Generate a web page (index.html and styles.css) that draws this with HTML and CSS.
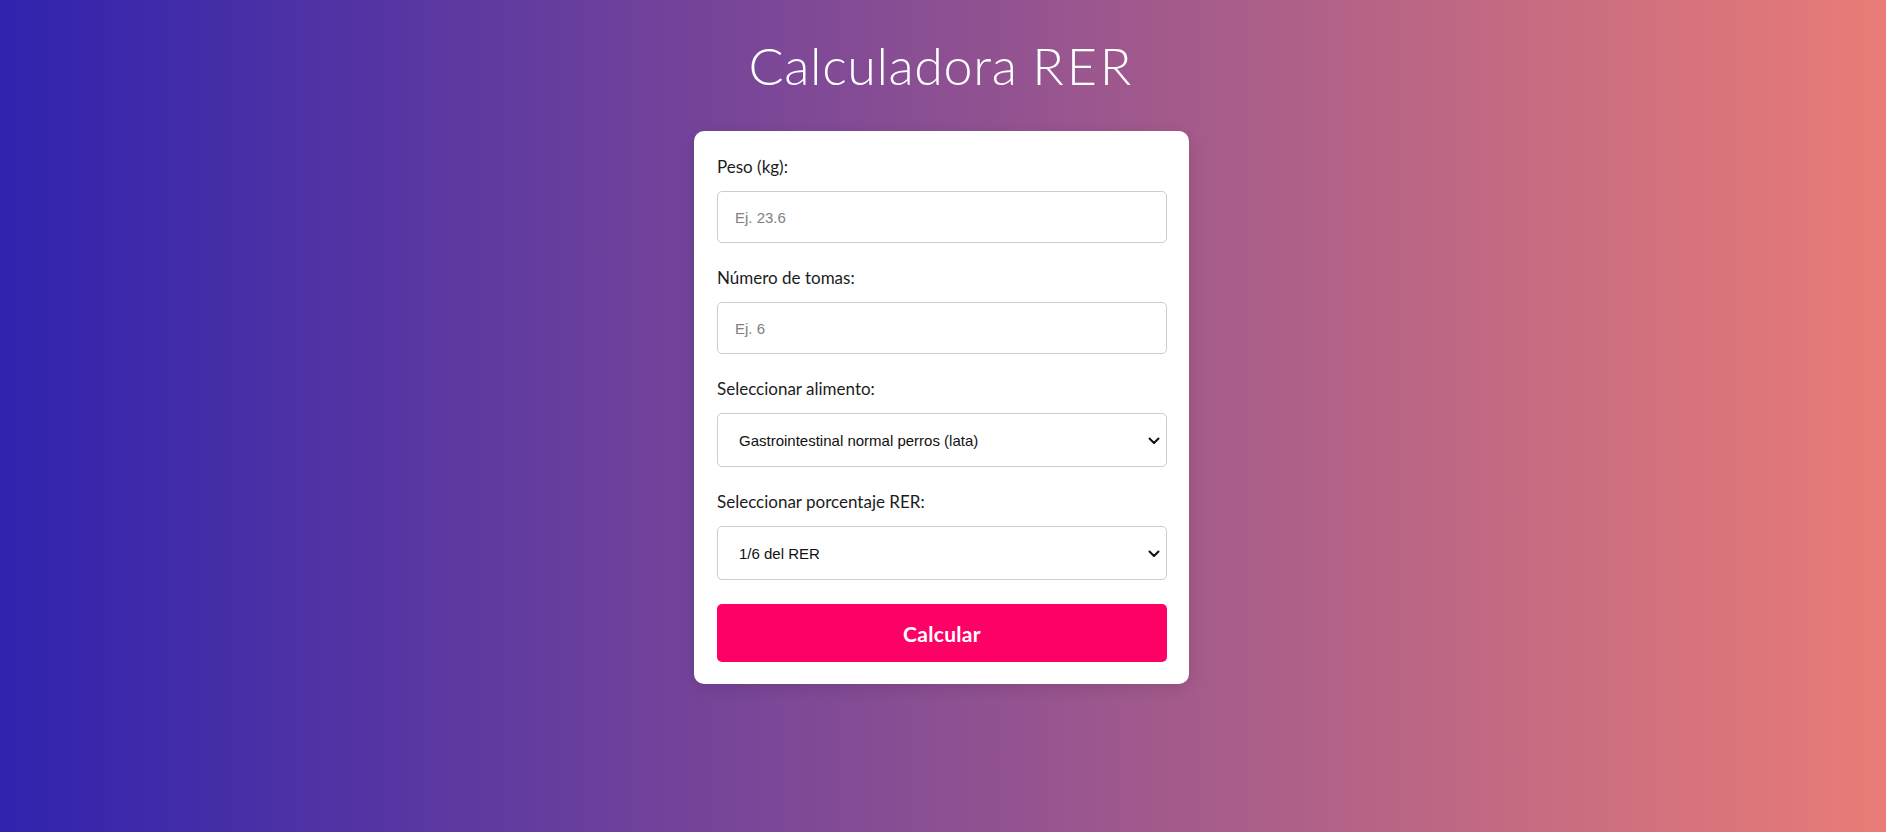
FILE: index.html
```html
<!DOCTYPE html>
<html lang="es">
<head>
<meta charset="utf-8">
<title>Calculadora RER</title>
<link rel="stylesheet" href="styles.css">
</head>
<body>
<main class="page">
  <h1 class="title">Calculadora <span class="title-accent">RER</span></h1>
  <form class="card">
    <label class="field-label" for="peso">Peso (kg):</label>
    <input class="field-input" id="peso" type="text" placeholder="Ej. 23.6">

    <label class="field-label" for="tomas">Número de tomas:</label>
    <input class="field-input" id="tomas" type="text" placeholder="Ej. 6">

    <label class="field-label" for="alimento">Seleccionar alimento:</label>
    <div class="select-wrap">
      <select class="field-select" id="alimento">
        <option>Gastrointestinal normal perros (lata)</option>
      </select>
      <svg class="chevron" width="12" height="8" viewBox="0 0 12 8"><path d="M1.5 1.5 L6 6 L10.5 1.5" fill="none" stroke="#111" stroke-width="2" stroke-linecap="round" stroke-linejoin="round"/></svg>
    </div>

    <label class="field-label" for="porcentaje">Seleccionar porcentaje RER:</label>
    <div class="select-wrap">
      <select class="field-select" id="porcentaje">
        <option>1/6 del RER</option>
      </select>
      <svg class="chevron" width="12" height="8" viewBox="0 0 12 8"><path d="M1.5 1.5 L6 6 L10.5 1.5" fill="none" stroke="#111" stroke-width="2" stroke-linecap="round" stroke-linejoin="round"/></svg>
    </div>

    <button class="btn" type="button">Calcular</button>
  </form>
</main>
</body>
</html>
```

FILE: styles.css
```css
html, body {
  margin: 0;
  padding: 0;
}

body {
  min-height: 100vh;
  background: linear-gradient(to right, #3023ae 0%, #e97c77 100%);
  font-family: "Lato", "Noto Sans", sans-serif;
}

.page {
  display: flex;
  flex-direction: column;
  align-items: center;
  padding-top: 34px;
  padding-right: 3px;
}

.title {
  margin: 0 0 35px 0;
  font-family: "Lato", "Noto Sans", sans-serif;
  font-weight: 300;
  font-size: 52px;
  line-height: 62px;
  color: #ffffff;
  letter-spacing: 0.6px;
}

.title-accent {
  letter-spacing: 3px;
}

.card {
  box-sizing: border-box;
  width: 495px;
  background: #ffffff;
  border-radius: 10px;
  padding: 24px 22px 22px 23px;
  box-shadow: 0 4px 16px rgba(0, 0, 0, 0.12);
  display: flex;
  flex-direction: column;
}

.field-label {
  display: block;
  font-family: "Lato", "Noto Sans", sans-serif;
  font-size: 17px;
  line-height: 24px;
  color: #1c1c1c;
  margin-bottom: 12px;
}

.field-input,
.field-select {
  box-sizing: border-box;
  width: 100%;
  border: 1px solid #cccccc;
  border-radius: 5px;
  background: #ffffff;
  font-family: "Liberation Sans", Arial, sans-serif;
  outline: none;
}

.field-input {
  height: 52px;
  padding: 0 17px;
  font-size: 15px;
  color: #222;
  margin-bottom: 23px;
}

.field-input::placeholder {
  color: #808080;
}

.select-wrap {
  position: relative;
  margin-bottom: 23px;
}

.field-select {
  -webkit-appearance: none;
  appearance: none;
  display: block;
  height: 54px;
  padding: 0 40px 0 21px;
  font-size: 15px;
  color: #111111;
}

.chevron {
  position: absolute;
  right: 7px;
  top: 50%;
  margin-top: -3px;
  pointer-events: none;
}

.btn {
  margin-top: 1px;
  height: 58px;
  width: 100%;
  border: none;
  border-radius: 5px;
  background: #ff0066;
  color: #ffffff;
  font-family: "Lato", "Noto Sans", sans-serif;
  font-weight: 700;
  font-size: 21px;
  letter-spacing: 0.3px;
  cursor: pointer;
}
```
